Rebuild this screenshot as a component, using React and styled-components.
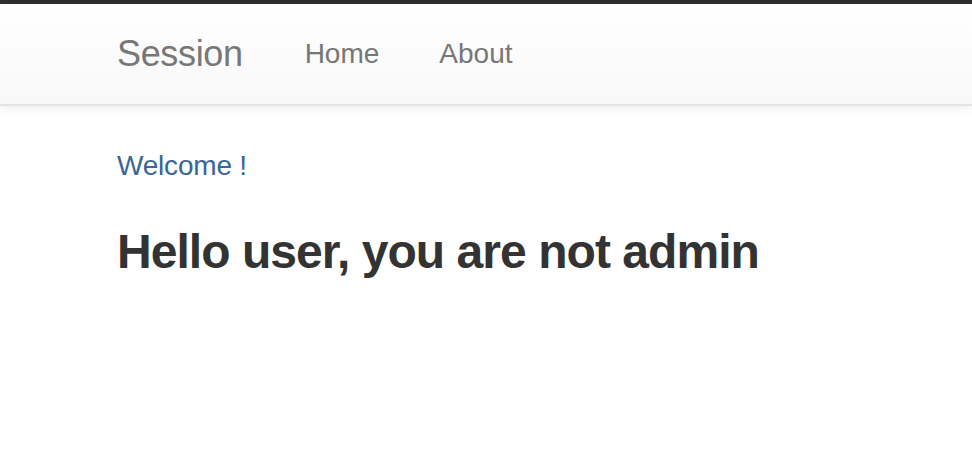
import React from "react";
import styled, { createGlobalStyle } from "styled-components";

const Global = createGlobalStyle`
  html, body { margin: 0; padding: 0; background: #fff; }
  body { font-family: "Liberation Sans", Arial, Helvetica, sans-serif; color: #333; }
  * { box-sizing: border-box; }
`;

const TopBar = styled.div`
  height: 4px;
  background: #2e2e2e;
`;

const Navbar = styled.nav`
  background-image: linear-gradient(to bottom, #ffffff 0%, #f8f8f8 100%);
  border-bottom: 2px solid #e4e4e4;
  box-shadow: 0 2px 10px rgba(0, 0, 0, 0.075);
  margin-bottom: 40px;
`;

const Container = styled.div`
  padding: 0 117px;
  display: flex;
  flex-direction: ${(p) => (p.$row ? "row" : "column")};
  align-items: ${(p) => (p.$row ? "center" : "flex-start")};
`;

const Brand = styled.a`
  margin-left: -30px;
  padding: 30px 32px 30px 30px;
  font-size: 36px;
  line-height: 40px;
  letter-spacing: -0.35px;
  color: #777;
  text-decoration: none;
`;

const NavList = styled.ul`
  display: flex;
  list-style: none;
  margin: 0;
  padding: 0;
`;

const NavLink = styled.a`
  display: block;
  padding: 30px;
  font-size: 28px;
  line-height: 40px;
  color: #777;
  text-decoration: none;
`;

const Welcome = styled.a`
  font-size: 28px;
  line-height: 40px;
  letter-spacing: -0.2px;
  color: #3a6599;
  text-decoration: none;
`;

const Heading = styled.h3`
  margin: 40px 0 20px;
  font-size: 48px;
  line-height: 1.1;
  font-weight: 700;
  letter-spacing: -0.95px;
  color: #333;
`;

export default function App() {
  return (
    <>
      <Global />
      <TopBar />
      <Navbar>
        <Container $row>
          <Brand href="#">Session</Brand>
          <NavList>
            <li><NavLink href="#">Home</NavLink></li>
            <li><NavLink href="#">About</NavLink></li>
          </NavList>
        </Container>
      </Navbar>
      <Container>
        <Welcome href="#">Welcome !</Welcome>
        <Heading>Hello user, you are not admin</Heading>
      </Container>
    </>
  );
}
